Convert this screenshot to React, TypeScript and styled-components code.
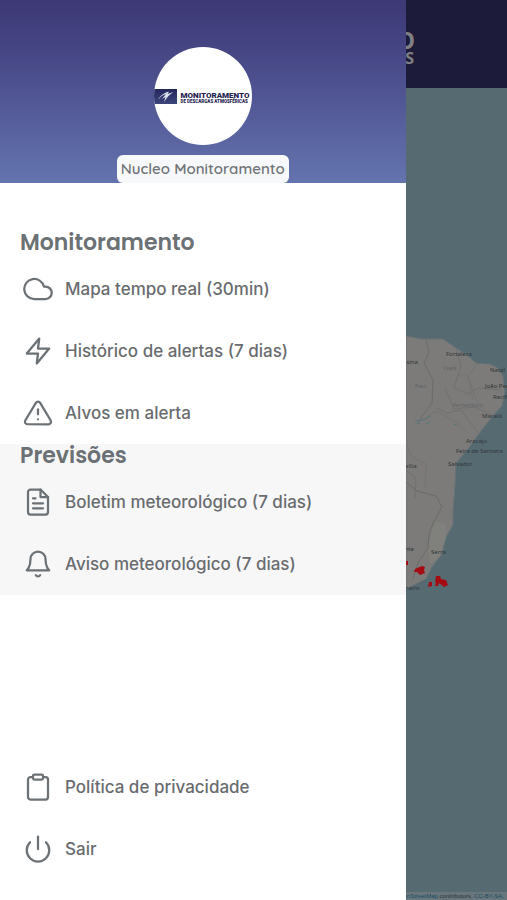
import React from "react";
import styled, { createGlobalStyle } from "styled-components";
import { FiCloud, FiZap, FiAlertTriangle, FiFileText, FiBell, FiClipboard, FiPower } from "react-icons/fi";
import type { IconType } from "react-icons";

const GlobalStyle = createGlobalStyle`
  * { box-sizing: border-box; }
  body { margin: 0; background: #54686f; font-family: Inter, "Noto Sans", sans-serif; }
`;

const Screen = styled.div`
  display: grid;
  grid-template-columns: 80% 20%;
  min-height: 100vh;
`;

const Drawer = styled.aside`
  display: flex;
  flex-direction: column;
  background: #fff;
  color: #696c6f;
`;

const Profile = styled.header`
  display: flex;
  flex-direction: column;
  align-items: center;
  gap: 10px;
  padding-top: 47px;
  background: linear-gradient(#3d3876 0%, #474786 30%, #6474ae 100%);
`;

const Avatar = styled.div`
  display: flex;
  align-items: center;
  justify-content: center;
  width: 98px;
  height: 98px;
  overflow: hidden;
  border-radius: 50%;
  background: #fff;
`;

const UserName = styled.div`
  padding: 4px;
  border-radius: 6px;
  background: #f7f8fa;
  color: #6f7477;
  font: 600 15px/20px Quicksand, Lato, sans-serif;
`;

const Menu = styled.nav`
  display: flex;
  flex: 1;
  flex-direction: column;
  padding-top: 48px;
`;

const Section = styled.section<{ $shaded?: boolean }>`
  background: ${(p) => (p.$shaded ? "#f7f7f8" : "transparent")};
`;

const Title = styled.h2`
  margin: 0;
  padding-left: 20px;
  color: #6b7174;
  font: 600 22px/24px Poppins, Inter, sans-serif;
`;

const List = styled.div`
  padding-top: 3px;
`;

const Item = styled.a`
  display: flex;
  align-items: center;
  gap: 12px;
  height: 62px;
  padding: 0 23px;
  color: inherit;
  font-size: 17px;
  font-weight: 500;
  line-height: 24px;
  text-decoration: none;
  svg { flex: none; stroke-width: 1.8; color: #6b7175; }
`;

const Footer = styled.footer`
  margin-top: auto;
  padding-bottom: 20px;
`;

const Backdrop = styled.main`
  display: flex;
  flex-direction: column;
  overflow: hidden;
  background: #566a72;
`;

const TopBar = styled.div`
  height: 88px;
  background: #1c1b3a;
  svg { display: block; }
`;

const MapArea = styled.div`
  flex: 1;
  svg { display: block; }
`;

const Attribution = styled.div`
  display: flex;
  justify-content: flex-end;
  height: 8px;
  padding-right: 3px;
  background: #69777c;
  color: #2b3439;
  font: 6px/8px "Liberation Sans", sans-serif;
  white-space: pre;
  a { color: #1b4b62; text-decoration: none; }
`;

function Logo() {
  return (
    <svg width="98" height="18" viewBox="0 0 196 36" role="img" aria-label="Monitoramento de Descargas Atmosféricas">
      <defs>
        <linearGradient id="badge" x1="0" y1="0" x2="0" y2="1">
          <stop offset="0" stopColor="#25265a" />
          <stop offset="1" stopColor="#3d467d" />
        </linearGradient>
      </defs>
      <rect x="0" y="4" width="46" height="30" fill="url(#badge)" />
      <path d="M8 26C12 17 20 12 30 9L27 14L39 10C31 15 27 20 20 30L23 20L16 24L24 14C17 16 12 20 8 26Z" fill="#dbe2ee" />
      <text x="53" y="22" fontFamily="Roboto, sans-serif" fontWeight="900" fontSize="16" fill="#242351">MONITORAMENTO</text>
      <text x="53" y="32" fontFamily="Roboto, sans-serif" fontWeight="900" fontSize="9" fill="#242351">DE DESCARGAS ATMOSFÉRICAS</text>
    </svg>
  );
}

function HeaderMark() {
  return (
    <svg width="101" height="88" viewBox="0 0 101 88" aria-hidden>
      <g fill="#808084" fontFamily="Open Sans, sans-serif" fontWeight="700" textAnchor="end">
        <text x="9" y="49" fontSize="23">O</text>
        <text x="8" y="64" fontSize="16">S</text>
      </g>
    </svg>
  );
}

const cities: [number, number, string][] = [
  [40, 268, "Fortaleza"], [-3, 276, "esina"], [84, 284, "Natal"], [79, 300, "João Pessoa"],
  [87, 311, "Recife"], [76, 330, "Maceió"], [60, 355, "Aracaju"], [50, 365, "Feira de Santana"],
  [42, 378, "Salvador"], [-10, 380, "Brasília"], [25, 466, "Serra"], [-5, 463, "onte"], [-6, 502, "Janeiro"],
];

const states: [number, number, string][] = [[37, 282, "Ceará"], [9, 300, "Piauí"], [47, 319, "Pernambuco"]];

function CoastMap() {
  return (
    <svg width="101" height="804" viewBox="0 0 101 804" role="img" aria-label="Mapa de descargas atmosféricas">
      <rect width="101" height="804" fill="#566a72" />
      <path d="M0 248L16 251L37 251L50 260L61 267L70 275L84 276L92 280L97 288L99 304L96 318L86 329L72 347L62 361L50 375L49 397L47 424L47 437L40 449L36 466L26 479L20 491L0 501Z" fill="#7c7b79" stroke="#657276" />
      <path d="M29 433L40 437L40 449L34 468L24 476L22 457Z" fill="#80817c" />
      <g fill="none" stroke="#6a6b6c" strokeWidth="1">
        <path d="M20 252L23 264L18 275L27 292L26 315L12 334M0 394L11 403L30 408L36 419L28 434L23 445L22 460L12 475L7 491" />
        <path d="M50 261L55 278L48 300L63 306L72 300L96 302M39 300L48 321L69 319L87 328M30 320L41 325L55 322L72 345M0 382L10 390L9 410" stroke="#707071" />
        <path d="M52 287L61 286L65 297L72 316M12 334L30 323L49 333L60 343M71 275L62 290L67 311M0 356L6 369L20 376L19 399" stroke="#747473" />
      </g>
      <path d="M9 333L18 332L25 328M11 335L14 336M20 336L24 334M48 336L51 337" fill="none" stroke="#547579" strokeWidth="1" />
      <g fontFamily="Noto Sans, sans-serif" fontSize="6" fill="#303537">
        {cities.map(([x, y, name]) => <text key={name} x={x} y={y}>{name}</text>)}
      </g>
      <g fontFamily="Noto Sans, sans-serif" fontSize="5" fill="#5f6266">
        {states.map(([x, y, name]) => <text key={name} x={x} y={y}>{name}</text>)}
      </g>
      <path d="M0 473h2v4h-2zM11 480l5-2 3 1-1 3 1 3-5 2-3-3-3 0 1-3zM30 488l4 0 1 3 5 1 2 5-4 2-5-4-4-1zM23 494l3 0 0 4-4 1zM30 494l3 1-1 3-3 0z" fill="#a40b12" />
    </svg>
  );
}

function MenuItem({ icon: Icon, label }: { icon: IconType; label: string }) {
  return (
    <Item href="#">
      <Icon size={30} aria-hidden />
      {label}
    </Item>
  );
}

export default function App() {
  return (
    <>
      <GlobalStyle />
      <Screen>
        <Drawer>
          <Profile>
            <Avatar><Logo /></Avatar>
            <UserName>Nucleo Monitoramento</UserName>
          </Profile>
          <Menu>
            <Section>
              <Title>Monitoramento</Title>
              <List>
                <MenuItem icon={FiCloud} label="Mapa tempo real (30min)" />
                <MenuItem icon={FiZap} label="Histórico de alertas (7 dias)" />
                <MenuItem icon={FiAlertTriangle} label="Alvos em alerta" />
              </List>
            </Section>
            <Section $shaded>
              <Title>Previsões</Title>
              <List>
                <MenuItem icon={FiFileText} label="Boletim meteorológico (7 dias)" />
                <MenuItem icon={FiBell} label="Aviso meteorológico (7 dias)" />
              </List>
            </Section>
            <Footer>
              <MenuItem icon={FiClipboard} label="Política de privacidade" />
              <MenuItem icon={FiPower} label="Sair" />
            </Footer>
          </Menu>
        </Drawer>
        <Backdrop>
          <TopBar><HeaderMark /></TopBar>
          <MapArea><CoastMap /></MapArea>
          <Attribution><a href="#">OpenStreetMap</a> contributors, <a href="#">CC-BY-SA</a>,</Attribution>
        </Backdrop>
      </Screen>
    </>
  );
}
